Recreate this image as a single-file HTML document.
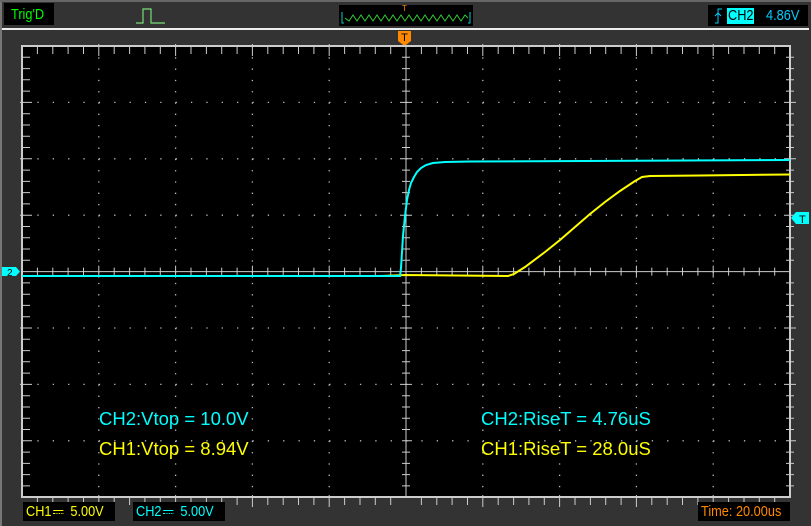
<!DOCTYPE html>
<html><head><meta charset="utf-8"><style>
body{margin:0;width:811px;height:526px;background:#333;overflow:hidden;position:relative;font-family:"Liberation Sans",sans-serif}
.box{position:absolute;background:#000}
.t{position:absolute;font-size:15px;transform:scaleX(.85);transform-origin:left top;white-space:nowrap}
.dc{display:inline-block;width:12px;height:8px;vertical-align:middle;border-top:1.5px solid currentColor;position:relative;top:2px;margin:0 4px 0 2px}
.dc:after{content:"";position:absolute;left:0;right:0;top:2px;border-top:1.5px dotted currentColor}
</style></head><body>
<div style="position:absolute;left:0;top:0;width:2px;height:526px;background:#777"></div>
<div style="position:absolute;left:0;top:0;width:811px;height:2px;background:#666"></div>
<div class="box" style="left:4px;top:3px;width:50px;height:22px"><span class="t" style="left:7px;top:3px;color:#0f0;font-size:15px">Trig'D</span></div>
<svg style="position:absolute;left:135px;top:6px" width="32" height="20"><path d="M1,17H8V3H16V17H30" stroke="#7d7" fill="none" stroke-width="1.2"/></svg>
<div class="box" style="left:339px;top:5px;width:134px;height:21px">
<span style="position:absolute;left:63px;top:-1px;color:#f80;font-size:8px">T</span>
<svg style="position:absolute;left:0;top:0" width="134" height="21"><path d="M3,7V18H5M131,7V18H129" stroke="#0cc" fill="none"/><polyline points="6,13 10,16 14,10 18,16 22,10 26,16 30,10 34,16 38,10 42,16 46,10 50,16 54,10 58,16 62,10 66,16 70,10 74,16 78,10 82,16 86,10 90,16 94,10 98,16 102,10 106,16 110,10 114,16 118,10 122,16 126,10 129,13" stroke="#3c3" fill="none"/></svg></div>
<div class="box" style="left:708px;top:5px;width:100px;height:21px">
<svg style="position:absolute;left:6px;top:3px" width="10" height="16"><path d="M1,15H4V1H8M1,8L4,5L7,8" stroke="#0cf" fill="none"/></svg>
<div style="position:absolute;left:19px;top:3px;width:27px;height:16px;background:#0ff"></div>
<span class="t" style="left:20px;top:2px;color:#000;font-size:15px">CH2</span>
<span class="t" style="left:58px;top:2px;color:#0cf;font-size:15px">4.86V</span></div>
<div style="position:absolute;left:2px;top:28px;width:807px;height:2px;background:#eee"></div>
<svg style="position:absolute;left:398px;top:31px" width="14" height="16"><path d="M0,0H13V10L6.5,15L0,10Z" fill="#f80"/><text x="6.5" y="10" font-size="11" text-anchor="middle" fill="#000" font-family="Liberation Sans">T</text></svg>
<svg style="position:absolute;left:0;top:0" width="811" height="526">
<rect x="22" y="46" width="768" height="451" fill="#000" stroke="#ccc" stroke-width="2"/>
<g stroke="#bbb" stroke-width="1.3">
<g stroke-dasharray="1.3 14.06">
<line x1="22" y1="102.4" x2="790" y2="102.4"/><line x1="22" y1="158.8" x2="790" y2="158.8"/><line x1="22" y1="215.2" x2="790" y2="215.2"/><line x1="22" y1="328" x2="790" y2="328"/><line x1="22" y1="384.4" x2="790" y2="384.4"/><line x1="22" y1="440.8" x2="790" y2="440.8"/>
</g>
<g stroke-dasharray="1.3 9.98">
<line x1="98.8" y1="46" x2="98.8" y2="497"/><line x1="175.6" y1="46" x2="175.6" y2="497"/><line x1="252.4" y1="46" x2="252.4" y2="497"/><line x1="329.2" y1="46" x2="329.2" y2="497"/><line x1="482.8" y1="46" x2="482.8" y2="497"/><line x1="559.6" y1="46" x2="559.6" y2="497"/><line x1="636.4" y1="46" x2="636.4" y2="497"/><line x1="713.2" y1="46" x2="713.2" y2="497"/>
</g>
</g>
<g stroke="#ccc" stroke-width="1">
<line x1="22" y1="271.6" x2="790" y2="271.6"/><line x1="406" y1="46" x2="406" y2="497"/>
<path id="ht" d="M37.4,267.6V275.6M52.8,267.6V275.6M68.1,267.6V275.6M83.5,267.6V275.6M98.8,265.6V277.6M114.2,267.6V275.6M129.6,267.6V275.6M144.9,267.6V275.6M160.3,267.6V275.6M175.6,265.6V277.6M191,267.6V275.6M206.4,267.6V275.6M221.7,267.6V275.6M237.1,267.6V275.6M252.4,265.6V277.6M267.8,267.6V275.6M283.2,267.6V275.6M298.5,267.6V275.6M313.9,267.6V275.6M329.2,265.6V277.6M344.6,267.6V275.6M360,267.6V275.6M375.3,267.6V275.6M390.7,267.6V275.6M421.4,267.6V275.6M436.8,267.6V275.6M452.1,267.6V275.6M467.5,267.6V275.6M482.8,265.6V277.6M498.2,267.6V275.6M513.6,267.6V275.6M528.9,267.6V275.6M544.3,267.6V275.6M559.6,265.6V277.6M575,267.6V275.6M590.4,267.6V275.6M605.7,267.6V275.6M621.1,267.6V275.6M636.4,265.6V277.6M651.8,267.6V275.6M667.2,267.6V275.6M682.5,267.6V275.6M697.9,267.6V275.6M713.2,265.6V277.6M728.6,267.6V275.6M744,267.6V275.6M759.3,267.6V275.6M774.7,267.6V275.6"/>
<use href="#ht" transform="translate(0,-221.6)"/>
<use href="#ht" transform="translate(0,229.4)"/>
<path id="vt" d="M402,57.3H410M402,68.6H410M402,79.8H410M402,91.1H410M400,102.4H412M402,113.7H410M402,125H410M402,136.2H410M402,147.5H410M400,158.8H412M402,170.1H410M402,181.4H410M402,192.6H410M402,203.9H410M400,215.2H412M402,226.5H410M402,237.8H410M402,249H410M402,260.3H410M402,282.9H410M402,294.2H410M402,305.4H410M402,316.7H410M400,328H412M402,339.3H410M402,350.6H410M402,361.8H410M402,373.1H410M400,384.4H412M402,395.7H410M402,407H410M402,418.2H410M402,429.5H410M402,440.8H412M402,452.1H410M402,463.4H410M402,474.6H410M402,485.9H410"/>
<use href="#vt" transform="translate(-380,0)"/>
<use href="#vt" transform="translate(384,0)"/>
</g>
<polyline fill="none" stroke="#ff0" stroke-width="2" points="380,276 405,275 508,276 514,274 525,267 545,252 560,240 575,227 590,214 605,202 620,191 635,181 642,177 650,176 700,175.5 790,174.5"/>
<polyline fill="none" stroke="#0ff" stroke-width="2" points="22,276 400,276 401,268 402,252 403,236 405,216 407,200 409,190 411,183 414,177 417,172 421,168 426,165 433,163 445,162 470,161.5 790,160"/>
<path d="M2,267H16L20,271.6L16,276H2Z" fill="#0ff"/><text x="7" y="276" font-size="10" fill="#000" font-family="Liberation Sans">2</text>
<path d="M809,212H796L791,218L796,224H809Z" fill="#0ff"/><text x="799" y="223" font-size="11" fill="#000" font-family="Liberation Sans">T</text>
<g font-family="Liberation Sans" font-size="18.5">
<text x="99" y="425" fill="#0ff">CH2:Vtop = 10.0V</text>
<text x="99" y="455" fill="#ff0">CH1:Vtop = 8.94V</text>
<text x="481" y="425" fill="#0ff">CH2:RiseT = 4.76uS</text>
<text x="481" y="455" fill="#ff0">CH1:RiseT = 28.0uS</text>
</g>
</svg>
<div class="box" style="left:23px;top:502px;width:92px;height:19px"><span class="t" style="left:3px;top:1px;color:#ff0">CH1<span class="dc"></span> 5.00V</span></div>
<div class="box" style="left:133px;top:502px;width:92px;height:19px"><span class="t" style="left:3px;top:1px;color:#0ff">CH2<span class="dc"></span> 5.00V</span></div>
<div class="box" style="left:698px;top:502px;width:92px;height:19px"><span class="t" style="left:3px;top:1px;color:#f80">Time: 20.00us</span></div>
</body></html>
